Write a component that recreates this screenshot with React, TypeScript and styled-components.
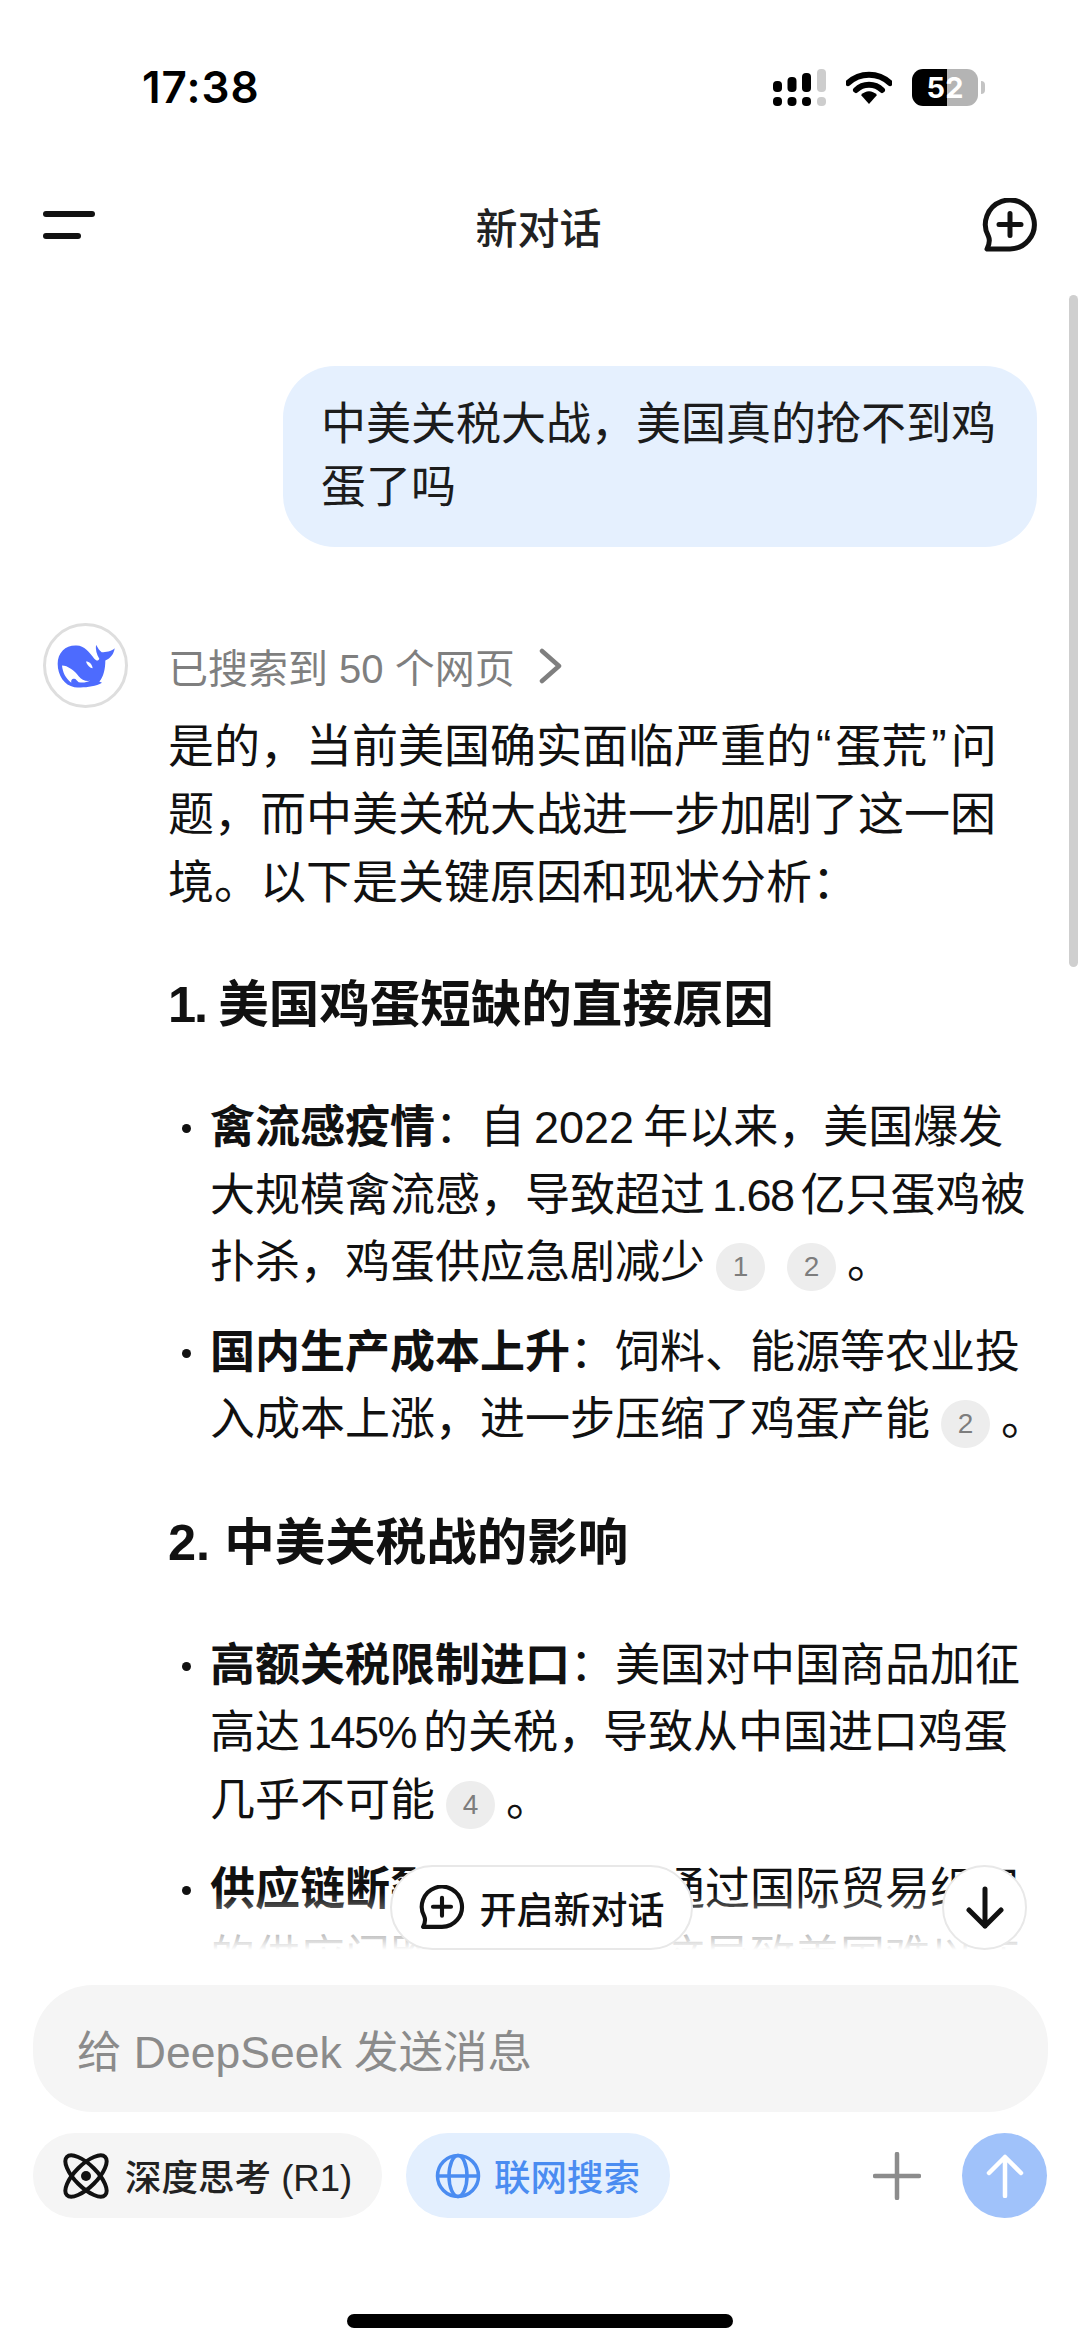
import React from "react";
import styled, { createGlobalStyle } from "styled-components";

const GlobalStyle = createGlobalStyle`
    html, body {
        margin: 0;
        padding: 0;
        background: #fff;
    }
`;

const FONT = `"Liberation Sans", "Noto Sans CJK SC", sans-serif`;

const Screen = styled.div`
    position: relative;
    width: 1080px;
    height: 2348px;
    overflow: hidden;
    background: #fff;
    font-family: ${FONT};
    color: #111;
    display: flex;
    flex-direction: column;
`;

const StatusBar = styled.div`
    height: 167px;
    flex: none;
    display: flex;
    align-items: flex-start;
    justify-content: space-between;
    padding: 69px 102px 0 142px;
    box-sizing: border-box;
`;

const Clock = styled.div`
    font-family: "Inter", sans-serif;
    font-size: 44px;
    line-height: 37px;
    font-weight: 600;
    color: #000;
    letter-spacing: 1px;
`;

const StatusIcons = styled.div`
    display: flex;
    align-items: center;
    gap: 20px;
`;

const Battery = styled.div`
    position: relative;
    width: 66px;
    height: 37px;
    border-radius: 11px;
    background: linear-gradient(to right, #000 0 35px, #b4b4b4 35px);
    color: #fff;
    font-family: "Inter", sans-serif;
    font-size: 29px;
    font-weight: 700;
    line-height: 37px;
    text-align: center;
    &::after {
        content: "";
        position: absolute;
        left: 69px;
        top: 12px;
        width: 4px;
        height: 13px;
        border-radius: 0 6px 6px 0;
        background: #c4c4c4;
    }
`;

const Header = styled.div`
    height: 116px;
    flex: none;
    display: flex;
    align-items: center;
    justify-content: space-between;
    padding: 0 42px 0 43px;
    margin-bottom: 8px;
`;

const HeaderTitle = styled.div`
    font-size: 42px;
    color: #222;
    font-weight: 500;
`;

const Scroll = styled.div`
    position: relative;
    height: 1694px;
    flex: none;
    overflow: hidden;
    padding-top: 75px;
    box-sizing: border-box;
`;

const ScrollThumb = styled.div`
    position: absolute;
    right: 2px;
    top: 4px;
    width: 9px;
    height: 672px;
    border-radius: 5px;
    background: #cfcfcf;
`;

const UserBubble = styled.div`
    margin-left: 283px;
    width: 754px;
    height: 181px;
    box-sizing: border-box;
    padding: 27px 30px 0 38px;
    border-radius: 52px;
    background: #e5f0fe;
    font-size: 45px;
    line-height: 63px;
    color: #1c1c1c;
`;

const Assistant = styled.div`
    display: flex;
    padding: 76px 0 0 43px;
`;

const Avatar = styled.div`
    width: 85px;
    height: 85px;
    flex: none;
    box-sizing: border-box;
    border: 3px solid #dedede;
    border-radius: 50%;
    display: flex;
    align-items: center;
    justify-content: center;
`;

const Answer = styled.div`
    margin-left: 40px;
    width: 880px;
`;

const SearchInfo = styled.div`
    display: flex;
    align-items: center;
    height: 86px;
    font-size: 40px;
    color: #7f7f7f;
    gap: 24px;
`;

const Para = styled.div`
    font-size: 46px;
    line-height: 68px;
    color: #111;
    white-space: nowrap;
    margin-top: 3px;
`;

const Quote = styled.span`
    padding: 0 4px;
`;

const Heading = styled.div<{ $top: number }>`
    font-size: 50.500px;
    font-weight: 700;
    line-height: 70px;
    color: #111;
    margin-top: ${(p) => p.$top}px;
`;

const HeadingNum = styled.span`
    letter-spacing: -2px;
`;

const BulletList = styled.ul`
    list-style: none;
    margin: 0;
    padding: 0;
`;

const Bullet = styled.li<{ $top: number }>`
    position: relative;
    padding-left: 42px;
    font-size: 45px;
    line-height: 67.500px;
    white-space: nowrap;
    margin-top: ${(p) => p.$top}px;
    &::before {
        content: "";
        position: absolute;
        left: 14px;
        top: 30px;
        width: 9px;
        height: 9px;
        border-radius: 50%;
        background: #111;
    }
`;

const Num = styled.span<{ $tight?: boolean }>`
    margin: 0 ${(p) => (p.$tight ? 7 : 9)}px;
    letter-spacing: ${(p) => (p.$tight ? "-1.500px" : "0")};
`;

const Ref = styled.span`
    display: inline-block;
    min-width: 49px;
    height: 48px;
    margin: 0 11px;
    border-radius: 24px;
    background: #ededed;
    color: #7d7d7d;
    font-size: 28px;
    line-height: 48px;
    text-align: center;
    vertical-align: 2px;
`;

const Fade = styled.div`
    position: absolute;
    left: 0;
    right: 0;
    bottom: 0;
    height: 92px;
    background: linear-gradient(to bottom, rgba(255, 255, 255, 0), #fff 62%);
`;

const FloatPill = styled.div`
    position: absolute;
    left: 390px;
    top: 1574px;
    width: 303px;
    height: 85px;
    box-sizing: border-box;
    border: 2px solid #e8e8e8;
    border-radius: 43px;
    background: #fff;
    display: flex;
    align-items: center;
    justify-content: center;
    gap: 15px;
    font-size: 37px;
    font-weight: 500;
    color: #111;
`;

const FloatRound = styled.div`
    position: absolute;
    left: 942px;
    top: 1574px;
    width: 85px;
    height: 85px;
    box-sizing: border-box;
    border: 2px solid #e8e8e8;
    border-radius: 50%;
    background: #fff;
    display: flex;
    align-items: center;
    justify-content: center;
`;

const Composer = styled.div`
    margin: 0 32px 0 33px;
    height: 127px;
    flex: none;
    border-radius: 60px;
    background: #f5f5f5;
    display: flex;
    align-items: center;
    padding-left: 44px;
    font-size: 44.500px;
    color: #8b8b8b;
`;

const Toolbar = styled.div`
    display: flex;
    align-items: center;
    margin: 21px 33px 0;
    height: 85px;
    flex: none;
`;

const Chip = styled.div<{ $active?: boolean }>`
    height: 85px;
    box-sizing: border-box;
    border-radius: 42px;
    display: flex;
    align-items: center;
    gap: ${(p) => (p.$active ? 13 : 16)}px;
    padding: 0 30px 0 ${(p) => (p.$active ? 29 : 30)}px;
    font-size: 36.500px;
    font-weight: 500;
    margin-right: 24px;
    background: ${(p) => (p.$active ? "#e3effe" : "#f5f5f5")};
    color: ${(p) => (p.$active ? "#4a8cf1" : "#222")};
`;

const Spacer = styled.div`
    flex: 1;
`;

const PlusButton = styled.div`
    width: 48px;
    height: 48px;
    margin-right: 41px;
`;

const SendButton = styled.div`
    width: 85px;
    height: 85px;
    border-radius: 50%;
    background: #a0c2fa;
    display: flex;
    align-items: center;
    justify-content: center;
`;

const HomeBar = styled.div`
    position: absolute;
    left: 347px;
    top: 2314px;
    width: 386px;
    height: 14px;
    border-radius: 7px;
    background: #000;
`;

const SignalIcon = () => (
    <svg width="53" height="37" viewBox="0 0 53 37">
        <rect x="0" y="12" width="9" height="11" rx="4" fill="#000" />
        <rect x="0" y="28" width="9" height="9" rx="4" fill="#000" />
        <rect x="14.500" y="8" width="9" height="15" rx="4" fill="#000" />
        <rect x="14.500" y="28" width="9" height="9" rx="4" fill="#000" />
        <rect x="29" y="4" width="9" height="19" rx="4" fill="#000" />
        <rect x="29" y="28" width="9" height="9" rx="4" fill="#000" />
        <rect x="44" y="0" width="9" height="23" rx="4" fill="#cdcdcd" />
        <rect x="44" y="28" width="9" height="9" rx="4" fill="#cdcdcd" />
    </svg>
);

const WifiIcon = () => (
    <svg width="46" height="33" viewBox="0 0 46 33">
        <path d="M2 12 C14 1 32 1 44 12" fill="none" stroke="#000" strokeWidth="6" strokeLinecap="round" />
        <path d="M10 19 C17 12 29 12 36 19" fill="none" stroke="#000" strokeWidth="6" strokeLinecap="round" />
        <path d="M15 24 C20 19 26 19 31 24 L23 33 Z" fill="#000" />
    </svg>
);

const NewChatIcon = ({ width }: { width: number }) => (
    <svg width={width} height={(width * 54) / 56} viewBox="0 0 56 54" fill="none">
        <path
            d="M5 51 H28 A24.500 24.500 0 1 0 6.500 38.500 C8 42 7 47 5 51 Z"
            stroke="#111"
            strokeWidth="5"
            strokeLinejoin="round"
        />
        <path d="M28 15.500 V37.500 M17 26.500 H39" stroke="#111" strokeWidth="5" strokeLinecap="round" />
    </svg>
);

const MenuIcon = () => (
    <svg width="52" height="28" viewBox="0 0 52 28">
        <rect x="0" y="0" width="52" height="6" rx="3" fill="#111" />
        <rect x="0" y="22" width="38" height="6" rx="3" fill="#111" />
    </svg>
);

const WhaleLogo = () => (
    <svg width="60" height="47" viewBox="50 70 180 140">
        <path
            fill="#4d6bfe"
            d="M55 135 C55 100 80 78 112 80 C135 80 150 100 165 120 C172 128 178 126 180 120 C172 108 168 92 170 78 C176 88 180 96 187 100 C200 100 215 98 226 88 C224 104 214 118 198 125 C198 150 192 175 180 188 L188 192 C165 205 130 208 105 205 C75 200 55 170 55 135 Z"
        />
        <path
            fill="#fff"
            d="M68 140 C85 140 105 155 118 172 C126 182 138 188 152 186 C140 192 128 192 118 190 C112 186 110 180 105 180 C96 180 95 185 96 192 C78 178 70 160 68 140 Z"
        />
        <path fill="#fff" d="M140 128 C150 128 158 136 160 148 C152 148 144 140 140 128 Z" />
    </svg>
);

const ThinkIcon = () => (
    <svg width="46" height="46" viewBox="0 0 46 46" fill="none" stroke="#111" strokeWidth="4">
        <ellipse cx="23" cy="23" rx="11" ry="27" transform="rotate(-45 23 23)" />
        <ellipse cx="23" cy="23" rx="11" ry="27" transform="rotate(45 23 23)" />
        <circle cx="23" cy="23" r="5" fill="#111" stroke="none" />
    </svg>
);

const GlobeIcon = () => (
    <svg width="46" height="46" viewBox="0 0 46 46" fill="none" stroke="#4a8cf1" strokeWidth="3.500">
        <circle cx="23" cy="23" r="20.500" />
        <ellipse cx="23" cy="23" rx="9" ry="20.500" />
        <path d="M2.500 23 H43.500" />
    </svg>
);

const App = () => {
    return (
        <>
            <GlobalStyle />
            <Screen>
                <StatusBar>
                    <Clock>17:38</Clock>
                    <StatusIcons>
                        <SignalIcon />
                        <WifiIcon />
                        <Battery>52</Battery>
                    </StatusIcons>
                </StatusBar>
                <Header>
                    <MenuIcon />
                    <HeaderTitle>新对话</HeaderTitle>
                    <NewChatIcon width={56} />
                </Header>
                <Scroll>
                    <ScrollThumb />
                    <UserBubble>
                        中美关税大战，美国真的抢不到鸡
                        <br />
                        蛋了吗
                    </UserBubble>
                    <Assistant>
                        <Avatar>
                            <WhaleLogo />
                        </Avatar>
                        <Answer>
                            <SearchInfo>
                                已搜索到 50 个网页
                                <svg width="24" height="36" viewBox="0 0 24 36" fill="none">
                                    <path d="M3 3 L20 18 L3 33" stroke="#7f7f7f" strokeWidth="4.500" strokeLinecap="round" strokeLinejoin="round" />
                                </svg>
                            </SearchInfo>
                            <Para>
                                是的，当前美国确实面临严重的<Quote>“</Quote>蛋荒<Quote>”</Quote>问
                                <br />
                                题，而中美关税大战进一步加剧了这一困
                                <br />
                                境。以下是关键原因和现状分析：
                            </Para>
                            <Heading $top={54}>
                                <HeadingNum>1. </HeadingNum>美国鸡蛋短缺的直接原因
                            </Heading>
                            <BulletList>
                                <Bullet $top={54}>
                                    <b>禽流感疫情</b>：自<Num>2022</Num>年以来，美国爆发
                                    <br />
                                    大规模禽流感，导致超过<Num $tight>1.68</Num>亿只蛋鸡被
                                    <br />
                                    扑杀，鸡蛋供应急剧减少<Ref>1</Ref>
                                    <Ref>2</Ref>。
                                </Bullet>
                                <Bullet $top={22}>
                                    <b>国内生产成本上升</b>：饲料、能源等农业投
                                    <br />
                                    入成本上涨，进一步压缩了鸡蛋产能<Ref>2</Ref>。
                                </Bullet>
                            </BulletList>
                            <Heading $top={54}>2. 中美关税战的影响</Heading>
                            <BulletList>
                                <Bullet $top={54}>
                                    <b>高额关税限制进口</b>：美国对中国商品加征
                                    <br />
                                    高达<Num $tight>145%</Num>的关税，导致从中国进口鸡蛋
                                    <br />
                                    几乎不可能<Ref>4</Ref>。
                                </Bullet>
                                <Bullet $top={22}>
                                    <b>供应链断裂</b>：美国难以通过国际贸易组织
                                    <br />
                                    的供应门路获得鸡蛋，这导致美国难以在
                                </Bullet>
                            </BulletList>
                        </Answer>
                    </Assistant>
                    <Fade />
                    <FloatPill>
                        <NewChatIcon width={46} />
                        开启新对话
                    </FloatPill>
                    <FloatRound>
                        <svg width="38" height="43" viewBox="0 0 38 43" fill="none">
                            <path d="M19 3 V40 M3 24 L19 40 L35 24" stroke="#111" strokeWidth="5" strokeLinecap="round" strokeLinejoin="round" />
                        </svg>
                    </FloatRound>
                </Scroll>
                <Composer>给 DeepSeek 发送消息</Composer>
                <Toolbar>
                    <Chip>
                        <ThinkIcon />
                        深度思考 (R1)
                    </Chip>
                    <Chip $active>
                        <GlobeIcon />
                        联网搜索
                    </Chip>
                    <Spacer />
                    <PlusButton>
                        <svg width="48" height="48" viewBox="0 0 48 48">
                            <path d="M24 2 V46 M2 24 H46" stroke="#8c8c8c" strokeWidth="4.500" strokeLinecap="round" />
                        </svg>
                    </PlusButton>
                    <SendButton>
                        <svg width="38" height="44" viewBox="0 0 38 44" fill="none">
                            <path d="M19 42 V3 M3 19 L19 3 L35 19" stroke="#fff" strokeWidth="4.500" strokeLinecap="round" strokeLinejoin="round" />
                        </svg>
                    </SendButton>
                </Toolbar>
                <HomeBar />
            </Screen>
        </>
    );
};

export default App;
